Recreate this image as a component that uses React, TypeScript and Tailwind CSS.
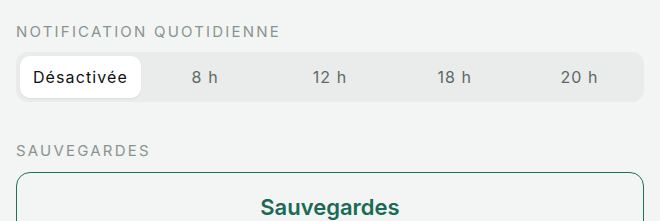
import React, { useState } from 'react';

const options = ['Désactivée', '8 h', '12 h', '18 h', '20 h'];

const App: React.FC = () => {
  const [selected, setSelected] = useState(0);

  return (
    <div className="h-[221px] w-full overflow-hidden bg-[#f3f5f4] px-4 pt-[23px] font-['Inter','Liberation_Sans',sans-serif]">
      <div className="text-[15px] leading-[18px] tracking-[2.2px] text-[#8a948f]">NOTIFICATION QUOTIDIENNE</div>
      <div className="mt-[11px] flex gap-1 rounded-[12px] bg-[#e9eceb] p-1">
        {options.map((opt, i) => (
          <button
            key={opt}
            onClick={() => setSelected(i)}
            className={`flex h-[42px] flex-1 items-center justify-center rounded-[10px] text-[16px] tracking-[1.1px] ${
              selected === i ? 'bg-white text-[#111] shadow-[0_1px_2px_rgba(0,0,0,0.06)]' : 'text-[#5d6964]'
            }`}
          >
            {opt}
          </button>
        ))}
      </div>
      <div className="mt-[40px] text-[15px] leading-[18px] tracking-[2.2px] text-[#8a948f]">SAUVEGARDES</div>
      <div className="mt-[12px] flex h-[80px] justify-center rounded-[14px] border-[1.5px] border-[#1f6f5c] pt-[20px]">
        <span className="text-[22px] font-semibold leading-[28px] text-[#1a6a56]">Sauvegardes</span>
      </div>
    </div>
  );
};

export default App;
